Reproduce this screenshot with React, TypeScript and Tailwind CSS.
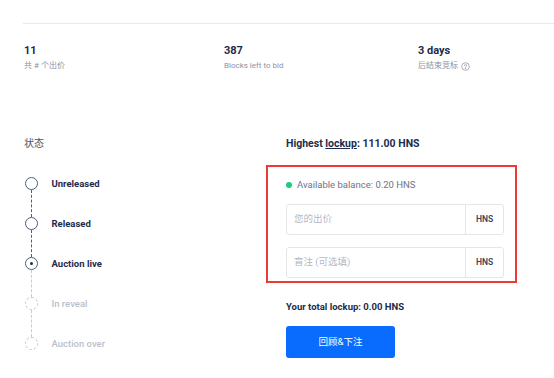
import React from "react";

const font = { fontFamily: 'Roboto, "Noto Sans CJK SC", sans-serif' };

function Step({ label, state }: { label: string; state: "done" | "active" | "future" }) {
  const circle =
    state === "future"
      ? "border border-dashed border-[#c5cad4]"
      : "border-[1.5px] border-[#4f5d78]";
  const text =
    state === "future" ? "text-[#b9bfca] font-medium" : "text-[#1d2b4c] font-bold";
  return (
    <div className="flex items-center h-[13px]">
      <div className={`w-[13px] h-[13px] rounded-full bg-white flex items-center justify-center ${circle}`}>
        {state === "active" && <div className="w-[3px] h-[3px] rounded-full bg-[#1d2b4c]" />}
      </div>
      <span className={`ml-[14px] text-[9.5px] leading-[12px] ${text}`}>{label}</span>
    </div>
  );
}

function Line({ light }: { light?: boolean }) {
  return (
    <div
      className={`ml-[6px] h-[27px] border-l border-dashed ${light ? "border-[#c5cad4]" : "border-[#4f5d78]"}`}
    />
  );
}

function Field({ placeholder }: { placeholder: string }) {
  return (
    <div className="flex h-[31px] w-[218px] border border-[#e3e6eb] rounded-[3px]">
      <div className="flex-1 flex items-center pl-[7px] text-[9.5px] text-[#b3b9c4]">{placeholder}</div>
      <div className="w-[38px] border-l border-[#e3e6eb] flex items-center justify-center text-[8.5px] font-semibold text-[#3a4660]">
        HNS
      </div>
    </div>
  );
}

export default function App() {
  return (
    <div className="w-[554px] h-[378px] overflow-hidden bg-white" style={font}>
      <div className="pt-[23px]">
        <div className="ml-[23px] h-px bg-[#e7e9ed]" />
        <div className="flex pl-[24px] mt-[20px]">
          <div className="w-[200px]">
            <div className="text-[11px] leading-[13px] font-bold text-[#1d2b4c]">11</div>
            <div className="mt-[4px] text-[8px] leading-[10px] text-[#8a93a5]">共 # 个出价</div>
          </div>
          <div className="w-[194px]">
            <div className="text-[11px] leading-[13px] font-bold text-[#1d2b4c]">387</div>
            <div className="mt-[4px] text-[8px] leading-[10px] text-[#8a93a5]">Blocks left to bid</div>
          </div>
          <div>
            <div className="text-[11px] leading-[13px] font-bold text-[#1d2b4c]">3 days</div>
            <div className="mt-[4px] text-[8px] leading-[10px] text-[#8a93a5] flex items-center gap-[3px]">
              后结束竞标
              <svg width="9" height="9" viewBox="0 0 16 16" fill="none" stroke="#8a93a5" strokeWidth="1.3">
                <circle cx="8" cy="8" r="6.8" />
                <path d="M6 6.3a2 2 0 1 1 2.6 1.9c-.4.2-.6.5-.6.9v.8" strokeLinecap="round" />
                <circle cx="8" cy="11.6" r="0.5" fill="#8a93a5" />
              </svg>
            </div>
          </div>
        </div>
        <div className="flex mt-[66px] pl-[24px]">
          <div className="w-[242px]">
            <div className="text-[10px] leading-[14px] text-[#4a556b]">状态</div>
            <div className="mt-[26px] ml-[0.5px]">
              <Step label="Unreleased" state="done" />
              <Line />
              <Step label="Released" state="done" />
              <Line />
              <Step label="Auction live" state="active" />
              <Line light />
              <Step label="In reveal" state="future" />
              <Line light />
              <Step label="Auction over" state="future" />
            </div>
          </div>
          <div className="w-[251px]">
            <div className="pl-[20px] text-[10.5px] leading-[14px] font-bold text-[#1d2b4c]">
              Highest <span className="underline">lockup</span>: 111.00 HNS
            </div>
            <div className="mt-[14px] border-2 border-[#ec3a37] pl-[18px] pr-[10px] pt-[12px] pb-[3px]">
              <div className="flex items-center h-[12px]">
                <div className="w-[6px] h-[6px] rounded-full bg-[#1ccc7e]" />
                <span className="ml-[5px] text-[9.5px] text-[#6b7488]">Available balance: 0.20 HNS</span>
              </div>
              <div className="mt-[13px]">
                <Field placeholder="您的出价" />
              </div>
              <div className="mt-[12px]">
                <Field placeholder="盲注 (可选填)" />
              </div>
            </div>
            <div className="pl-[20px] mt-[18px] text-[9.5px] leading-[12px] font-bold text-[#1d2b4c]">
              Your total lockup: 0.00 HNS
            </div>
            <div className="pl-[20px] mt-[13px]">
              <div className="w-[109px] h-[32px] rounded-[3px] bg-[#0a6cff] flex items-center justify-center text-[9.5px] text-white">
                回顾&amp;下注
              </div>
            </div>
          </div>
        </div>
      </div>
    </div>
  );
}
